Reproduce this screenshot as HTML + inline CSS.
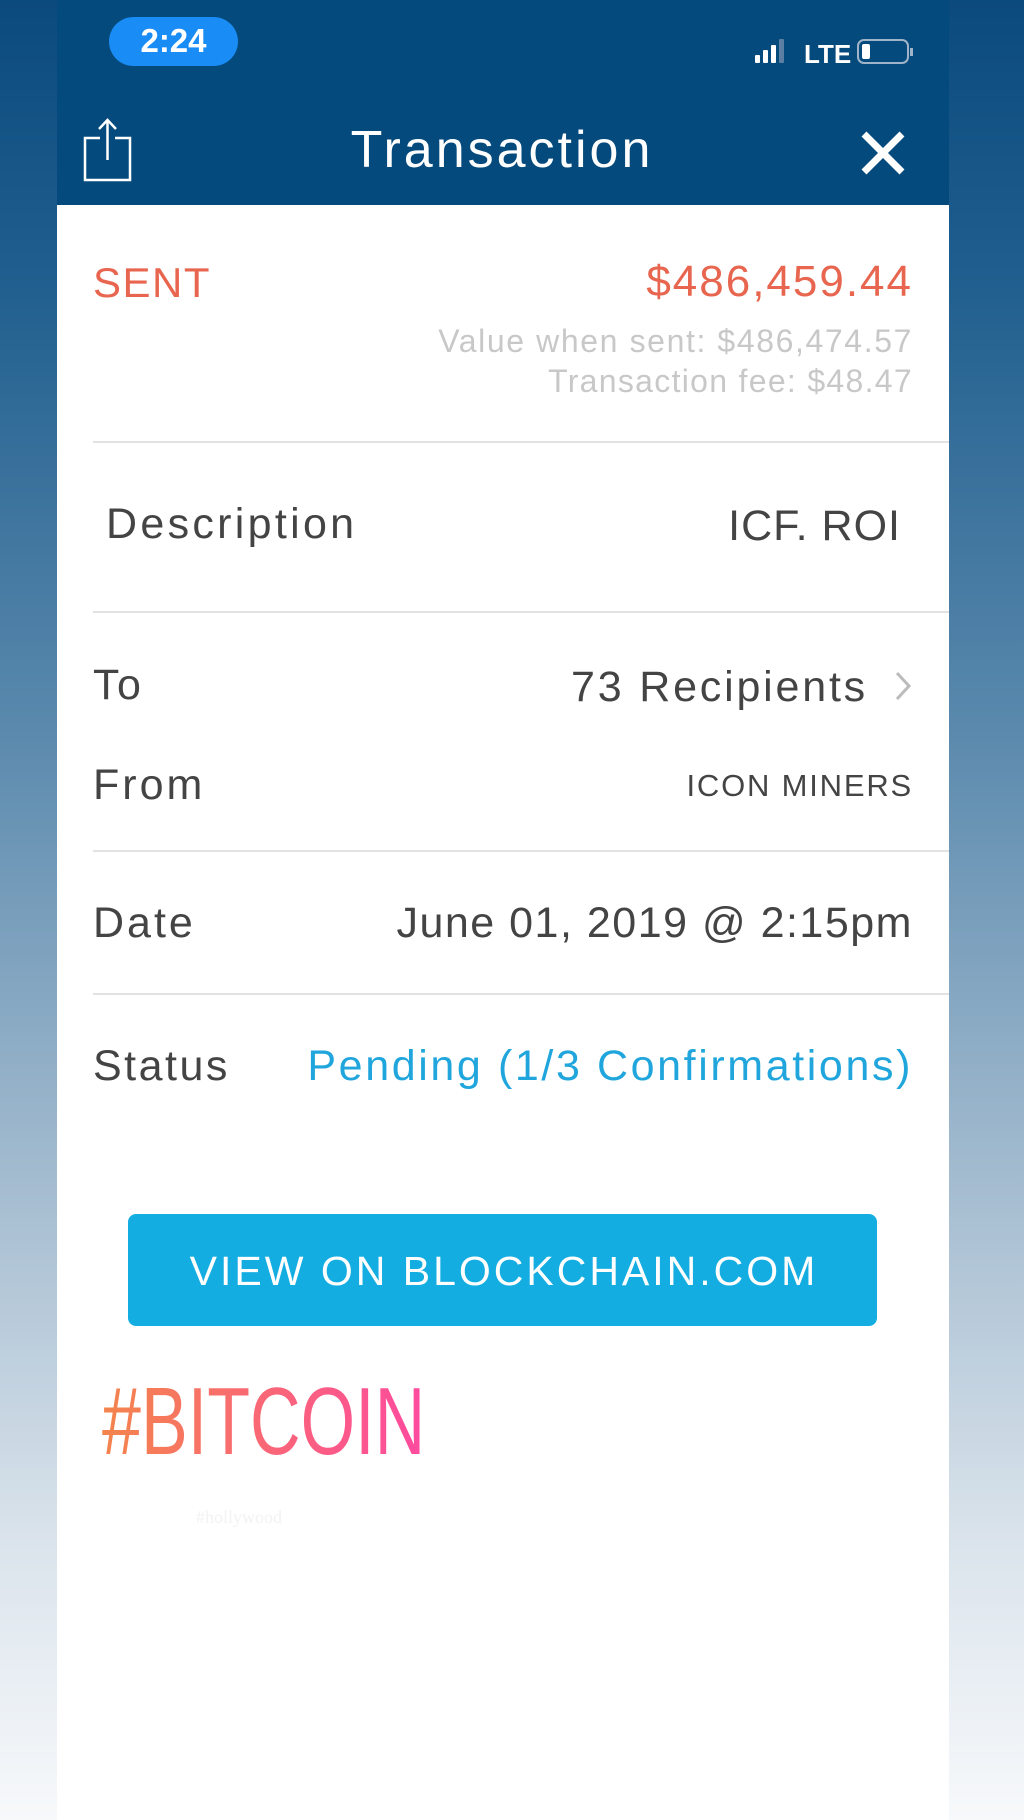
<!DOCTYPE html>
<html><head><meta charset="utf-8"><style>
*{margin:0;padding:0;box-sizing:border-box}
body{width:1024px;height:1820px;position:relative;overflow:hidden;font-family:"Liberation Sans",sans-serif;
background:linear-gradient(to bottom,#0b4a7d 0%,#1f5e8e 15%,#5a89ad 40%,#a4bcd0 65%,#dbe4ec 85%,#f7f9fb 100%)}
.panel{position:absolute;left:57px;top:0;width:892px;height:1820px;background:#fff}
.hdr{position:absolute;left:57px;top:0;width:892px;height:205px;background:#054a7c}
.t{position:absolute;white-space:nowrap;line-height:1}
.r{text-align:right}
.line{position:absolute;left:93px;width:856px;height:2px;background:#e2e2e2}
.lab{color:#444;font-size:43px;letter-spacing:2.5px}
</style></head><body>
<div class="panel"></div>
<div class="hdr"></div>
<div style="position:absolute;left:109px;top:17px;width:129px;height:49px;border-radius:25px;background:#1a8cf5"></div>
<div class="t" style="left:109px;top:24px;width:129px;text-align:center;color:#fff;font-weight:bold;font-size:33px">2:24</div>
<svg style="position:absolute;left:754px;top:36px" width="162" height="32" viewBox="0 0 162 32">
<rect x="1" y="19" width="5" height="8" rx="1" fill="#fff"/><rect x="9" y="14" width="5" height="13" rx="1" fill="#fff"/><rect x="17" y="9" width="5" height="18" rx="1" fill="#fff"/><rect x="25" y="3" width="5" height="24" rx="1" fill="#5a7fa2"/>
<text x="50" y="27" fill="#fff" font-family="Liberation Sans" font-weight="bold" font-size="26">LTE</text>
<rect x="104" y="4" width="50" height="23" rx="6" fill="none" stroke="#9fb4c8" stroke-width="2"/><rect x="108" y="8" width="8" height="15" rx="2" fill="#fff"/><rect x="156" y="12" width="3" height="8" fill="#9fb4c8"/>
</svg>
<svg style="position:absolute;left:83px;top:118px" width="50" height="66" viewBox="0 0 50 66">
<path d="M17 20H2V62H47V20H32M24.5 42V2M16 11L24.5 2L33 11" fill="none" stroke="#fff" stroke-width="2.5"/>
</svg>
<div class="t" style="left:300px;top:124px;width:404px;text-align:center;color:#fff;font-size:52px;letter-spacing:3px">Transaction</div>
<svg style="position:absolute;left:860px;top:130px" width="46" height="46" viewBox="0 0 46 46"><path d="M4 4L42 42M42 4L4 42" stroke="#fff" stroke-width="7"/></svg>

<div class="t" style="left:93px;top:262px;color:#e8664f;font-size:42px;letter-spacing:1.5px">SENT</div>
<div class="t r" style="right:111px;top:260px;color:#e8664f;font-size:44px;letter-spacing:2px">$486,459.44</div>
<div class="t r" style="right:111px;top:325px;color:#c8c8c8;font-size:32px;letter-spacing:1.6px">Value when sent: $486,474.57</div>
<div class="t r" style="right:111px;top:365px;color:#c8c8c8;font-size:32px;letter-spacing:1.3px">Transaction fee: $48.47</div>
<div class="line" style="top:441px"></div>

<div class="t lab" style="left:106px;top:503px;letter-spacing:3.3px">Description</div>
<div class="t r lab" style="right:123px;top:505px;letter-spacing:1px">ICF. ROI</div>
<div class="line" style="top:611px"></div>

<div class="t lab" style="left:93px;top:664px">To</div>
<div class="t r lab" style="right:156px;top:666px;letter-spacing:2.8px">73 Recipients</div>
<svg style="position:absolute;left:894px;top:670px" width="18" height="32" viewBox="0 0 18 32"><path d="M3 3L15 16L3 29" fill="none" stroke="#bbb" stroke-width="3"/></svg>
<div class="t lab" style="left:93px;top:764px;letter-spacing:3px">From</div>
<div class="t r" style="right:111px;top:770px;color:#444;font-size:31px;letter-spacing:1.8px">ICON MINERS</div>
<div class="line" style="top:850px"></div>

<div class="t lab" style="left:93px;top:902px;letter-spacing:3px">Date</div>
<div class="t r lab" style="right:111px;top:902px;letter-spacing:1.5px">June 01, 2019 @ 2:15pm</div>
<div class="line" style="top:993px"></div>

<div class="t lab" style="left:93px;top:1045px">Status</div>
<div class="t r" style="right:111px;top:1045px;color:#20a6dc;font-size:43px;letter-spacing:2.6px">Pending (1/3 Confirmations)</div>

<div style="position:absolute;left:128px;top:1214px;width:749px;height:112px;border-radius:8px;background:#13ade2"></div>
<div class="t" style="left:128px;top:1251px;width:752px;text-align:center;color:#fff;font-size:41px;letter-spacing:3px">VIEW ON BLOCKCHAIN.COM</div>

<div class="t" style="left:102px;top:1374px;font-size:96px;font-family:'Liberation Sans Narrow','Liberation Sans',sans-serif;transform:scaleX(0.73);transform-origin:left;background:linear-gradient(to right,#f4844c,#fe4aa0);-webkit-background-clip:text;background-clip:text;color:transparent">#BITCOIN</div>
<div class="t" style="left:196px;top:1508px;font-size:18px;color:#f2f2f2;font-family:'Liberation Serif',serif">#hollywood</div>
</body></html>
